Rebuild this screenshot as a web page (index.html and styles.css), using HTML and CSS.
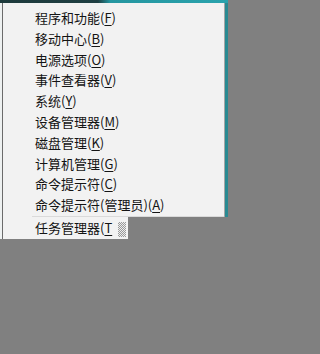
FILE: index.html
```html
<!DOCTYPE html>
<html lang="zh-CN">
<head>
<meta charset="utf-8">
<link rel="stylesheet" href="styles.css">
</head>
<body>
<div class="topbar"></div>
<div class="panel">
  <div class="edge-left"></div>
  <div class="menu">
    <div class="item">程序和功能(<u>F</u>)</div>
    <div class="item">移动中心(<u>B</u>)</div>
    <div class="item">电源选项(<u>O</u>)</div>
    <div class="item">事件查看器(<u>V</u>)</div>
    <div class="item">系统(<u>Y</u>)</div>
    <div class="item">设备管理器(<u>M</u>)</div>
    <div class="item">磁盘管理(<u>K</u>)</div>
    <div class="item">计算机管理(<u>G</u>)</div>
    <div class="item">命令提示符(<u>C</u>)</div>
    <div class="item">命令提示符(管理员)(<u>A</u>)</div>
    <div class="separator"></div>
  </div>
  <div class="edge-right"></div>
</div>
<div class="last-row">
  <div class="edge-left"></div>
  <div class="last-item">
    <span class="label">任务管理器(<u>T</u></span>
    <span class="grip"></span>
  </div>
  <div class="gray-tab"></div>
</div>
</body>
</html>
```
FILE: styles.css
```css
html, body {
  margin: 0;
  padding: 0;
}
body {
  width: 228px;
  height: 354px;
  background: #808080;
  font-family: "Noto Sans CJK SC", "Microsoft YaHei", sans-serif;
  font-size: 13px;
  color: #141414;
  overflow: hidden;
}
.topbar {
  height: 3px;
  background: linear-gradient(to right, #1d3a3c 0, #1f3f42 98px, #2596a0 110px, #2aa3ad 228px);
}
.panel {
  display: flex;
  height: 214px;
}
.edge-left {
  width: 3px;
  flex: none;
  background: linear-gradient(to right, #eef1f1 0 2px, #6b6b6b 2px 3px);
}
.edge-right {
  width: 4px;
  flex: none;
  background: linear-gradient(to right, #a6a6a6 0 1px, #2a8a92 1px 4px);
}
.menu {
  flex: 1;
  background: #f2f2f2;
  padding-top: 5px;
  display: flex;
  flex-direction: column;
}
.item {
  height: 20.8px;
  line-height: 20.8px;
  padding-left: 32px;
  white-space: nowrap;
}
.item u, .label u {
  text-underline-offset: 2px;
}
.separator {
  height: 1px;
  margin-left: 29px;
  background: #dadada;
}
.last-row {
  display: flex;
  height: 22px;
}
.last-item {
  width: 125px;
  flex: none;
  display: flex;
  background: #f2f2f2;
}
.label {
  width: 80px;
  flex: none;
  padding-left: 32px;
  line-height: 22px;
  white-space: nowrap;
}
.grip {
  width: 8px;
  height: 15px;
  margin-top: 5px;
  margin-left: 3px;
  background-color: #e6e6e6;
  background-image: repeating-conic-gradient(#9a9a9a 0 25%, #ededed 0 50%);
  background-size: 2px 2px;
}
.gray-tab {
  flex: 1;
  margin-top: 7px;
  background: #808080;
}
```
